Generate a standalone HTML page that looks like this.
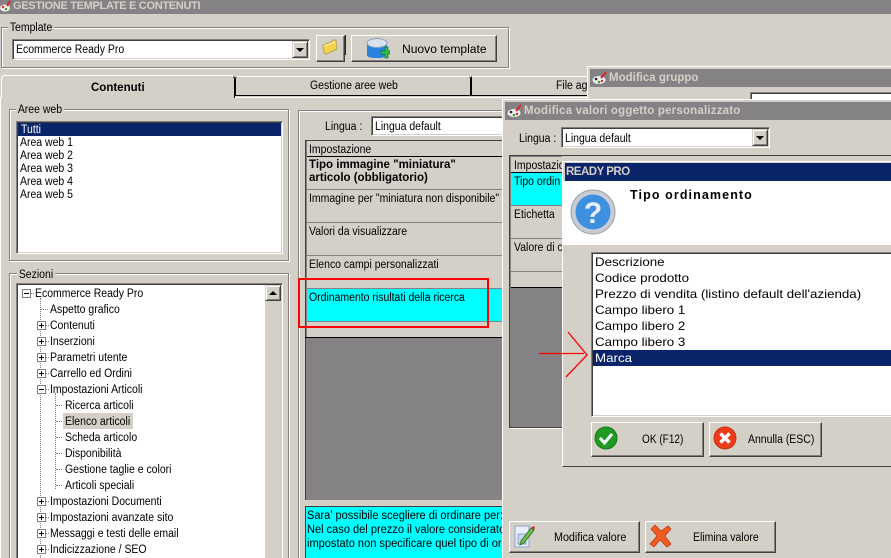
<!DOCTYPE html>
<html><head><meta charset="utf-8"><style>
html,body{margin:0;padding:0;width:891px;height:558px;overflow:hidden;background:#d4d0c8}
body{position:relative;font:11.5px/13px "Liberation Sans",sans-serif;color:#000}
div,span,svg{position:absolute;box-sizing:border-box}
.t{white-space:nowrap;transform:translateY(1px) scaleX(.91);transform-origin:left top}
.grp{border:1px solid #85827f;box-shadow:inset 1px 1px 0 #fff,1px 1px 0 #fff}
.lab{background:#d4d0c8;padding:0 2px;white-space:nowrap;transform:translateY(2px) scaleX(.91);transform-origin:left top}
.sunk{background:#fff;border:1px solid;border-color:#808080 #fff #fff #808080;box-shadow:inset 1px 1px 0 #404040,inset -1px -1px 0 #d4d0c8}
.btn{background:#d4d0c8;border:1px solid;border-color:#fff #404040 #404040 #fff;box-shadow:inset -1px -1px 0 #808080}
.ttl{background:#858285;color:#d4d0c8;font-weight:bold;white-space:nowrap}
.ln{background:#000}
.p{width:9px;height:9px;background:#fff;border:1px solid #808080}
.p:before{content:"";position:absolute;left:1px;top:3px;width:5px;height:1px;background:#000}
.p.c:after{content:"";position:absolute;left:3px;top:1px;width:1px;height:5px;background:#000}
.dot{border-left:1px dotted #808080;width:1px}
.hd{border-top:1px dotted #808080;height:1px}
.arr{width:16px;height:17px;background:#d4d0c8;border:1px solid;border-color:#d4d0c8 #404040 #404040 #d4d0c8;box-shadow:inset 1px 1px 0 #fff,inset -1px -1px 0 #808080}
.arr.dn:after{content:"";position:absolute;left:3px;top:6px;border:4px solid transparent;border-top:4px solid #000;border-bottom:0}
</style></head><body>

<!-- main title -->
<div class="ttl" style="left:0;top:0;width:891px;height:14px;font-size:11px;line-height:12px;padding-left:13px;letter-spacing:-.3px">GESTIONE TEMPLATE E CONTENUTI</div>
<svg style="left:0;top:0" width="12" height="13" viewBox="0 0 12 13"><ellipse cx="5" cy="8" rx="5" ry="3.5" fill="#eee"/><circle cx="3" cy="7" r="1.2" fill="#d22"/><circle cx="6" cy="9" r="1.2" fill="#2a2"/><path d="M7 6L10 1" stroke="#d22" stroke-width="2"/></svg>

<!-- template group -->
<div class="grp" style="left:1px;top:27px;width:508px;height:41px"></div>
<div class="lab" style="left:8px;top:20px">Template</div>
<div class="sunk" style="left:12px;top:39px;width:298px;height:21px"></div>
<div class="t" style="left:16px;top:43px">Ecommerce Ready Pro</div>
<div class="arr dn" style="left:292px;top:41px"></div>
<div class="btn" style="left:316px;top:35px;width:29px;height:27px"></div>
<div style="left:345px;top:35px;width:1px;height:20px;background:#0a246a"></div>
<svg style="left:322px;top:39px" width="16" height="16" viewBox="0 0 16 16"><path d="M1 6L9 3L11 1L14 1L15 10L5 15L2 14Z" fill="#f7d24a" stroke="#b9a46a"/><path d="M2 7L13 3" stroke="#fff3b0"/></svg>
<div class="btn" style="left:351px;top:35px;width:146px;height:27px"></div>
<svg style="left:366px;top:36px" width="24" height="24" viewBox="0 0 24 24"><path d="M1 8H21V19Q21 22 11 22Q1 22 1 19Z" fill="#2a82dc"/><ellipse cx="11" cy="7" rx="10" ry="4.5" fill="#d9e2ec" stroke="#8aa0b8"/><path d="M15 15h4v-4h3v4h2v3h-2v4h-3v-4h-4z" fill="#2cc24a" stroke="#137a2a" stroke-width=".7"/></svg>
<div class="t" style="left:402px;top:43px;transform:translateY(1px) scaleX(1.05)">Nuovo template</div>

<!-- tabs -->
<div style="left:0;top:97px;width:891px;height:1px;background:#fff"></div>
<div style="left:1px;top:75px;width:234px;height:23px;background:#d4d0c8;border:1px solid #fff;border-bottom:0;border-radius:4px 4px 0 0;border-right:1px solid #000"></div>
<div class="t" style="left:91px;top:80px;font-weight:bold;font-size:11.5px;transform:translateY(2px)">Contenuti</div>
<div style="left:235px;top:76px;width:236px;height:20px;border:1px solid #000;border-top:1px solid #fff;border-left:1px solid #000;border-radius:3px 3px 0 0;background:#d4d0c8"></div>
<div class="t" style="left:310px;top:79px">Gestione aree web</div>
<div style="left:471px;top:76px;width:420px;height:20px;border-top:1px solid #fff;border-left:1px solid #000;border-bottom:1px solid #000;background:#d4d0c8"></div>
<div class="t" style="left:556px;top:79px">File ag</div>
<div style="left:0;top:98px;width:1px;height:460px;background:#fff"></div>

<!-- aree web -->
<div class="grp" style="left:9px;top:109px;width:280px;height:152px"></div>
<div class="lab" style="left:16px;top:102px">Aree web</div>
<div class="sunk" style="left:16px;top:121px;width:267px;height:133px"></div>
<div style="left:18px;top:123px;width:263px;height:13px;background:#0a246a"></div>
<div class="t" style="left:21px;top:123px;color:#fff">Tutti</div>
<div class="t" style="left:20px;top:136px">Area web 1</div>
<div class="t" style="left:20px;top:149px">Area web 2</div>
<div class="t" style="left:20px;top:162px">Area web 3</div>
<div class="t" style="left:20px;top:175px">Area web 4</div>
<div class="t" style="left:20px;top:188px">Area web 5</div>

<!-- sezioni -->
<div class="grp" style="left:9px;top:273px;width:280px;height:290px"></div>
<div class="lab" style="left:17px;top:267px">Sezioni</div>
<div class="sunk" style="left:16px;top:283px;width:267px;height:290px"></div>
<div style="left:265px;top:285px;width:16px;height:273px;background:#d4d0c8"></div>
<div class="arr" style="left:265px;top:285px;height:16px"></div>
<div style="left:269px;top:291px;width:0;height:0;border:4px solid transparent;border-bottom:4px solid #000;border-top:0"></div>

<div class="dot" style="left:40px;top:298px;height:260px"></div>
<div class="dot" style="left:55px;top:393px;height:96px"></div>
<div class="hd" style="left:27px;top:293px;width:7px"></div>
<div class="p" style="left:22px;top:289px"></div>
<div class="t" style="left:35px;top:287px">Ecommerce Ready Pro</div>

<div class="hd" style="left:41px;top:309px;width:7px"></div>
<div class="t" style="left:50px;top:303px">Aspetto grafico</div>
<div class="hd" style="left:45px;top:325px;width:4px"></div><div class="p c" style="left:37px;top:321px"></div>
<div class="t" style="left:50px;top:319px">Contenuti</div>
<div class="hd" style="left:45px;top:341px;width:4px"></div><div class="p c" style="left:37px;top:337px"></div>
<div class="t" style="left:50px;top:335px">Inserzioni</div>
<div class="hd" style="left:45px;top:357px;width:4px"></div><div class="p c" style="left:37px;top:353px"></div>
<div class="t" style="left:50px;top:351px">Parametri utente</div>
<div class="hd" style="left:45px;top:373px;width:4px"></div><div class="p c" style="left:37px;top:369px"></div>
<div class="t" style="left:50px;top:367px">Carrello ed Ordini</div>
<div class="hd" style="left:45px;top:389px;width:4px"></div><div class="p" style="left:37px;top:385px"></div>
<div class="t" style="left:50px;top:383px">Impostazioni Articoli</div>

<div class="hd" style="left:56px;top:405px;width:6px"></div>
<div class="t" style="left:65px;top:399px">Ricerca articoli</div>
<div class="hd" style="left:56px;top:421px;width:6px"></div>
<div style="left:63px;top:413px;width:70px;height:16px;background:#d4d0c8"></div>
<div class="t" style="left:65px;top:415px">Elenco articoli</div>
<div class="hd" style="left:56px;top:437px;width:6px"></div>
<div class="t" style="left:65px;top:431px">Scheda articolo</div>
<div class="hd" style="left:56px;top:453px;width:6px"></div>
<div class="t" style="left:65px;top:447px">Disponibilità</div>
<div class="hd" style="left:56px;top:469px;width:6px"></div>
<div class="t" style="left:65px;top:463px">Gestione taglie e colori</div>
<div class="hd" style="left:56px;top:485px;width:6px"></div>
<div class="t" style="left:65px;top:479px">Articoli speciali</div>

<div class="hd" style="left:45px;top:501px;width:4px"></div><div class="p c" style="left:37px;top:497px"></div>
<div class="t" style="left:50px;top:495px">Impostazioni Documenti</div>
<div class="hd" style="left:45px;top:517px;width:4px"></div><div class="p c" style="left:37px;top:513px"></div>
<div class="t" style="left:50px;top:511px">Impostazioni avanzate sito</div>
<div class="hd" style="left:45px;top:533px;width:4px"></div><div class="p c" style="left:37px;top:529px"></div>
<div class="t" style="left:50px;top:527px">Messaggi e testi delle email</div>
<div class="hd" style="left:45px;top:549px;width:4px"></div><div class="p c" style="left:37px;top:545px"></div>
<div class="t" style="left:50px;top:543px">Indicizzazione / SEO</div>

<!-- right panel -->
<div class="grp" style="left:298px;top:110px;width:260px;height:460px"></div>
<div class="t" style="left:325px;top:120px">Lingua :</div>
<div class="sunk" style="left:371px;top:116px;width:150px;height:20px"></div>
<div class="t" style="left:375px;top:120px">Lingua default</div>
<div style="left:305px;top:140px;width:210px;height:360px;background:#858285;border:1px solid #404040;border-bottom:0"></div>
<div style="left:307px;top:141px;width:206px;height:197px;background:#d4d0c8"></div>
<div class="t" style="left:309px;top:143px">Impostazione</div>
<div style="left:307px;top:156px;width:206px;height:1px;background:#000"></div>
<div class="t" style="left:309px;top:159px;font-weight:bold;line-height:13px;transform:translateY(0)">Tipo immagine "miniatura"<br>articolo (obbligatorio)</div>
<div style="left:307px;top:189px;width:206px;height:1px;background:#858285"></div>
<div class="t" style="left:309px;top:192px">Immagine per "miniatura non disponibile"</div>
<div style="left:307px;top:222px;width:206px;height:1px;background:#858285"></div>
<div class="t" style="left:309px;top:225px">Valori da visualizzare</div>
<div style="left:307px;top:255px;width:206px;height:1px;background:#858285"></div>
<div class="t" style="left:309px;top:258px">Elenco campi personalizzati</div>
<div style="left:307px;top:288px;width:206px;height:1px;background:#858285"></div>
<div style="left:307px;top:289px;width:206px;height:32px;background:#0ff"></div>
<div class="t" style="left:309px;top:291px">Ordinamento risultati della ricerca</div>
<div style="left:307px;top:321px;width:206px;height:1px;background:#858285"></div>
<div style="left:305px;top:337px;width:210px;height:1px;background:#000"></div>

<div style="left:305px;top:506px;width:210px;height:60px;background:#0ff;border:1px solid #404040"></div>
<div class="t" style="left:307px;top:509px;line-height:14px;transform:translateY(0) scaleX(.96)">Sara' possibile scegliere di ordinare per:<br>Nel caso del prezzo il valore considerato<br>impostato non specificare quel tipo di ord</div>

<div style="left:298px;top:278px;width:191px;height:50px;border:2px solid #f00"></div>

<!-- window: Modifica gruppo -->
<div style="left:587px;top:66px;width:310px;height:60px;background:#d4d0c8;border-top:1px solid #fff;border-left:1px solid #fff"></div>
<div class="ttl" style="left:590px;top:69px;width:301px;height:18px;line-height:18px;padding-left:19px;font-size:11.5px">Modifica gruppo</div>
<svg style="left:592px;top:70px" width="16" height="16" viewBox="0 0 16 16"><ellipse cx="7" cy="10" rx="6.5" ry="4" fill="#eee"/><circle cx="4" cy="9" r="1.3" fill="#222"/><circle cx="7" cy="12" r="1.3" fill="#2a2"/><circle cx="10" cy="11" r="1.2" fill="#e22"/><path d="M9 8L14 2" stroke="#d22" stroke-width="2"/></svg>
<div class="sunk" style="left:750px;top:92px;width:150px;height:20px"></div>

<!-- window: Modifica valori -->
<div style="left:502px;top:99px;width:400px;height:470px;background:#d4d0c8;border-top:1px solid #fff;border-left:1px solid #fff"></div>
<div class="ttl" style="left:505px;top:102px;width:386px;height:18px;line-height:18px;padding-left:19px;font-size:11.5px;letter-spacing:.2px">Modifica valori oggetto personalizzato</div>
<svg style="left:507px;top:103px" width="16" height="16" viewBox="0 0 16 16"><ellipse cx="7" cy="10" rx="6.5" ry="4" fill="#eee"/><circle cx="4" cy="9" r="1.3" fill="#222"/><circle cx="7" cy="12" r="1.3" fill="#2a2"/><circle cx="10" cy="11" r="1.2" fill="#e22"/><path d="M9 8L14 2" stroke="#d22" stroke-width="2"/></svg>
<div class="t" style="left:519px;top:132px">Lingua :</div>
<div class="sunk" style="left:561px;top:127px;width:209px;height:21px"></div>
<div class="t" style="left:565px;top:132px">Lingua default</div>
<div class="arr dn" style="left:752px;top:129px"></div>

<div style="left:509px;top:155px;width:60px;height:273px;background:#858285;border:1px solid #404040;box-shadow:1px 1px 0 #fff"></div>
<div style="left:511px;top:157px;width:52px;height:131px;background:#d4d0c8"></div>
<div class="t" style="left:514px;top:159px">Impostazio</div>
<div style="left:511px;top:172px;width:52px;height:1px;background:#000"></div>
<div style="left:511px;top:173px;width:52px;height:32px;background:#0ff"></div>
<div class="t" style="left:514px;top:175px">Tipo ordin</div>
<div style="left:511px;top:205px;width:52px;height:1px;background:#858285"></div>
<div class="t" style="left:514px;top:208px">Etichetta</div>
<div style="left:511px;top:238px;width:52px;height:1px;background:#858285"></div>
<div class="t" style="left:514px;top:241px">Valore di c</div>
<div style="left:511px;top:271px;width:52px;height:1px;background:#858285"></div>
<div style="left:511px;top:287px;width:52px;height:1px;background:#000"></div>
<div style="left:710px;top:155px;width:190px;height:10px;background:#d4d0c8;border-top:1px solid #404040"></div>
<div style="left:562px;top:155px;width:148px;height:6px;background:#d4d0c8;border-top:1px solid #404040"></div>

<!-- bottom buttons -->
<div class="btn" style="left:509px;top:521px;width:131px;height:32px"></div>
<svg style="left:514px;top:524px" width="22" height="25" viewBox="0 0 22 25"><path d="M1 2H15V23H1Z" fill="#e8eefc" stroke="#8fa3c8"/><path d="M4 10H12V20H4Z" fill="#c8d4ec" stroke="#8fa3c8"/><path d="M7 17L17 4L20 6L10 19L6 21Z" fill="#6fc04a" stroke="#2d7a2a"/><path d="M17 4L20 6L21 3L19 2Z" fill="#c33"/></svg>
<div class="t" style="left:554px;top:531px;transform:translateY(1px) scaleX(.935)">Modifica valore</div>
<div class="btn" style="left:645px;top:521px;width:131px;height:32px"></div>
<svg style="left:649px;top:524px" width="24" height="24" viewBox="0 0 24 24"><path d="M2 5L6 1L12 7L19 2L22 5L16 12L22 20L18 23L11 16L5 23L1 20L8 12Z" fill="#ee5a24" stroke="#b83a10" stroke-width=".7"/></svg>
<div class="t" style="left:693px;top:531px">Elimina valore</div>

<!-- dialog READY PRO -->
<div style="left:562px;top:161px;width:340px;height:306px;background:#d4d0c8;border-top:1px solid #fff;border-left:1px solid #fff;border-bottom:1px solid #404040;box-shadow:0 -1px 0 #d4d0c8"></div>
<div style="left:565px;top:163px;width:326px;height:18px;background:#0a246a;color:#d4d0c8;font-weight:bold;font-size:11.5px;line-height:18px;padding-left:1px;white-space:nowrap;letter-spacing:-.5px">READY PRO</div>
<div style="left:563px;top:181px;width:328px;height:64px;background:#fff"></div>
<svg style="left:570px;top:189px" width="46" height="46" viewBox="0 0 46 46"><circle cx="23" cy="23" r="22" fill="#c8ccd4" stroke="#9aa0aa"/><circle cx="23" cy="23" r="17.5" fill="#3f8fe0"/><text x="23" y="34" text-anchor="middle" font-family="Liberation Sans" font-weight="bold" font-size="30" fill="#e8eefc">?</text></svg>
<div class="t" style="left:630px;top:188px;font-weight:bold;font-size:12.5px;letter-spacing:1.1px;transform:translateY(1px)">Tipo ordinamento</div>

<div class="sunk" style="left:591px;top:252px;width:310px;height:165px"></div>
<div style="left:593px;top:350px;width:298px;height:16px;background:#0a246a"></div>
<div class="t" style="left:595px;top:254px;font-size:12px;line-height:16px;transform:scaleX(1.11)">Descrizione<br>Codice prodotto<br>Prezzo di vendita (listino default dell'azienda)<br>Campo libero 1<br>Campo libero 2<br>Campo libero 3<br><span style="position:static;color:#fff">Marca</span></div>

<div class="btn" style="left:591px;top:422px;width:113px;height:35px"></div>
<svg style="left:594px;top:426px" width="24" height="24" viewBox="0 0 24 24"><circle cx="12" cy="12" r="11" fill="#1f9a22" stroke="#0f7a18"/><path d="M6 12L10.5 17L18 8" fill="none" stroke="#fff" stroke-width="3"/></svg>
<div class="t" style="left:642px;top:433px;transform:translateY(1px) scaleX(.875)">OK (F12)</div>
<div class="btn" style="left:709px;top:422px;width:113px;height:35px"></div>
<svg style="left:713px;top:426px" width="24" height="24" viewBox="0 0 24 24"><circle cx="12" cy="12" r="11" fill="#ee3a1c" stroke="#c8300f"/><path d="M7.5 7.5L16.5 16.5M16.5 7.5L7.5 16.5" fill="none" stroke="#fff" stroke-width="3.4"/></svg>
<div class="t" style="left:748px;top:433px">Annulla (ESC)</div>

<!-- red arrow -->
<svg style="left:0;top:0" width="891" height="558"><path d="M539 353.5H584M568 332L587 355L566 377" fill="none" stroke="#f00" stroke-width="1.3"/></svg>

</body></html>
